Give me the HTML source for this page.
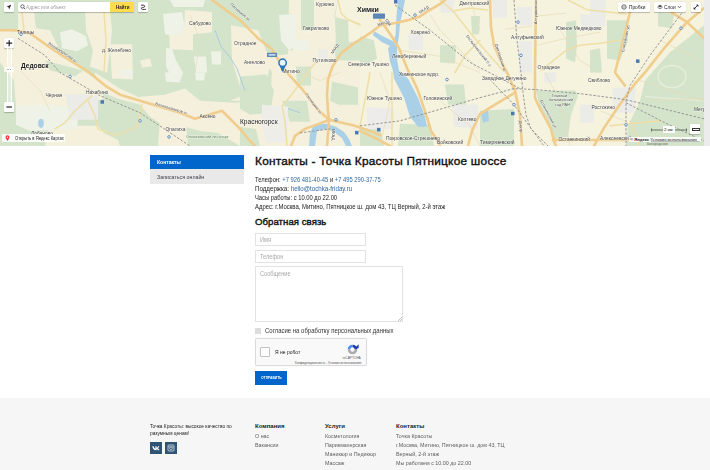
<!DOCTYPE html>
<html><head><meta charset="utf-8">
<style>
html,body{margin:0;padding:0}
body{width:710px;height:470px;overflow:hidden;background:#fff;position:relative;font-family:"Liberation Sans",sans-serif;color:#222}
.abs{position:absolute;white-space:nowrap}
#map{position:absolute;left:0;top:0;width:704px;height:146px;background:#f5f2de;overflow:hidden}
#strip{position:absolute;left:704px;top:0;width:6px;height:146px;background:#ececec}
.side1{position:absolute;left:150px;top:154.5px;width:94px;height:14.5px;background:#0066cc}
.side2{position:absolute;left:150px;top:169px;width:94px;height:15px;background:#e9e9e9}
.t6{font-size:6.6px;line-height:9px;transform-origin:0 0;transform:scaleX(0.88)}
.inp{position:absolute;border:1px solid #e2e2e2;background:#fff;box-sizing:border-box}
.ph{position:absolute;font-size:6.6px;line-height:8px;color:#a8a8a8;white-space:nowrap;transform-origin:0 0;transform:scaleX(0.85)}
#footer{position:absolute;left:0;top:398px;width:710px;height:72px;background:#f6f6f6}
.fh{font-size:6px;line-height:8px;font-weight:bold;color:#222}
.fl{font-size:6.2px;line-height:8px;color:#5e5e5e;transform-origin:0 0;transform:scaleX(0.865)}
</style></head><body>
<div id="map"><svg width="704" height="146" viewBox="0 0 704 145" preserveAspectRatio="none" style="position:absolute;left:0;top:0;filter:blur(0.3px)">
<rect width="704" height="146" fill="#f5f2de"/>
<!-- left half green base -->
<path fill="#d4e4cb" d="M0,0 L338,0 L335,17 L318,30 L300,30 L290,32 L289,60 L300,85 L285,100 L255,100 L240,100 L240,146 L0,146 Z"/>
<!-- beige patches in left half -->
<g fill="#f4f0dc">
<path d="M18,12 L34,12 L36,28 L50,30 L58,46 L52,50 L40,44 L30,33 L18,30 Z"/>
<path d="M0,30 L30,33 L47,45 L65,57 L83,70 L98,80 L104,98 L83,103 L70,112 L16,106 L14,80 L0,62 Z"/>
<path d="M95,72 L120,88 L140,97 L140,104 L118,98 L98,90 Z"/>
<path d="M85,10 L110,10 L112,30 L110,50 L107,72 L90,66 L93,50 L86,30 Z"/>
<path d="M49,125 L98,125 L104,132 L118,139 L120,145 L45,145 Z"/>
<path d="M110,44 L132,44 L133,79 L112,78 Z"/>
<path d="M185,10 L212,12 L212,32 L193,34 L193,50 L170,49 L169,32 L184,30 Z"/>
<path d="M231,25 L258,30 L266,50 L272,60 L266,80 L256,88 L240,86 L232,60 Z"/>
<path d="M140,96 L165,94 L185,88 L200,100 L235,102 L255,100 L260,120 L262,145 L240,145 L218,132 L200,130 L185,126 L165,126 L150,116 L140,104 Z"/>
<path d="M160,118 L186,122 L188,145 L158,145 Z"/>
<path d="M289,0 L301,0 L301,34 L314,34 L314,0 L338,0 L334,17 L336,50 L348,50 L360,60 L360,145 L240,145 L240,100 L270,100 L272,72 L266,60 L278,55 L288,54 Z"/>

<path d="M140,60 L150,58 L152,66 L142,67 Z"/>
<path d="M230,100 L250,92 L256,100 Z"/>
</g>
<!-- greens over beige (left half detail) -->
<g fill="#d4e4cb">
<path d="M282,100 L307,100 L310,121 L290,121 Z"/>
<path d="M296,66 L311,66 L311,85 L297,85 Z"/>
<path d="M332,81 L358,87 L358,104 L339,104 L330,100 Z"/>
<path d="M265,14 L293,14 L293,50 L275,50 Z"/>
<path d="M334,45 L360,40 L360,60 L336,60 Z"/>
<path d="M240,126 L256,128 L260,145 L240,145 Z"/>
<path d="M240,76 L266,74 L274,90 L270,112 L250,114 L240,108 Z"/>
<path d="M335,17 L348,20 L349,48 L336,50 Z"/>
<path d="M45,60 L83,70 L75,76 L50,70 Z"/>
</g>
<g fill="#eff2e6">
<path d="M16,105 L50,104 L79,108 L77,128 L30,130 L16,124 Z"/>
<path d="M166,48 L172,48 L176,60 L183,72 L181,79 L172,78 L166,66 Z"/>
<path d="M120,69 L132,69 L132,77 L121,77 Z"/>
</g>
<ellipse cx="41" cy="122.5" rx="2.8" ry="4.5" fill="#aad0e8"/>
<!-- right half greens -->
<g fill="#d4e4cb">
<path d="M360,36 L374,40 L377,58 L368,63 L360,62 Z"/>
<path d="M440,45 L456,45 L455,63 L440,62 Z"/>
<path d="M471,16 L480,16 L479,34 L472,34 Z"/>
<path d="M400,123 L430,124 L434,145 L398,145 Z"/>
<path d="M445,84 L464,84 L466,104 L448,104 Z"/>
<path d="M480,110 L514,108 L514,145 L480,145 Z"/>
<path d="M536,90 L575,90 L578,95 L571,114 L568,136 L554,138 L551,128 L540,108 Z"/>
<path d="M566,22 L576,20 L577,45 L575,62 L566,58 Z"/>
<path d="M590,50 L600,48 L602,72 L590,72 Z"/>
<path d="M607,20 L628,20 L628,40 L620,60 L607,58 Z"/>
<path d="M704,25 L670,52 L645,80 L640,100 L628,125 L626,145 L704,146 Z"/>
<path d="M658,12 L674,14 L672,28 L658,26 Z"/>
<path d="M360,128 L380,126 L384,145 L360,145 Z"/>
</g>
<!-- white clearings -->
<g fill="#eff2e6">
<path d="M60,32 L72,29 L86,36 L88,45 L77,51 L62,48 Z"/>
<path d="M163,14 L182,12 L185,28 L178,36 L165,34 Z"/>
<path d="M194,56 L206,56 L207,72 L196,72 Z"/>
<path d="M211,51 L221,51 L221,64 L212,64 Z"/>
<path d="M279,15 L295,14 L296,47 L289,50 L281,40 Z"/>
<path d="M294,40 L308,40 L309,50 L296,51 Z"/>
<path d="M165,72 L181,72 L180,82 L166,81 Z"/>
<path d="M195,72 L205,72 L204,80 L196,80 Z"/>
<path d="M170,0 L205,0 L203,7 L174,7 Z"/>

</g>
<!-- urban gray -->
<g fill="#ebebe7">
<path d="M65,93 L98,95 L98,119 L70,119 Z"/>
<path d="M262,104 L288,106 L288,140 L266,142 L262,124 Z" fill="#eeede8"/>
<path d="M318,49 L328,49 L328,58 L318,58 Z"/>
<path d="M408,34 L423,34 L423,50 L409,50 Z"/>
<path d="M440,0 L454,0 L453,13 L441,13 Z"/>
<path d="M492,0 L507,0 L507,18 L493,18 Z"/>
<path d="M517,7 L532,7 L532,25 L517,25 Z"/>
<path d="M519,41 L532,41 L532,72 L519,72 Z"/>
<path d="M580,14 L600,16 L598,30 L582,30 Z"/>
<path d="M612,88 L636,86 L634,112 L614,112 Z"/>
<path d="M590,0 L606,0 L605,26 L590,26 Z"/>
<path d="M452,104 L478,104 L478,128 L454,126 Z"/>
<path d="M366,106 L394,108 L394,128 L368,128 Z" fill="#edecea"/>
<path d="M544,72 L556,72 L556,82 L544,82 Z"/>
<path d="M580,104 L594,104 L594,122 L580,122 Z"/>
</g>
<ellipse cx="672" cy="76" rx="14" ry="11" fill="none" stroke="#e6eddb" stroke-width="1.4"/>
<path d="M645,96 L704,100" stroke="#e6eddb" stroke-width="1.1" fill="none"/>
<!-- water -->
<g fill="#aad0e8">
<path d="M398,0 L397,10 L396,23 L395.5,35 L392,43 L388,48 L390,61 L393,70 L394,78 L404,97 L410,116 L418,126 L427,126 L425,116 L418,97 L408,78 L399,70 L397.4,61 L397,48 L399,35 L400,23 L403,10 L405,0 Z"/>
<path d="M374,31 L383,36 L393,41 L391,46 L382,42 L373,35 Z"/>
<path d="M309,145 L310,132 L314,124 L326,123 L336,126 L344,131 L349,138 L352,145 L346,145 L342,137 L334,131 L326,128 L317,130 L315,145 Z"/>
<path d="M481,112 L488,110 L489,120 L483,122 Z"/>
</g>
<g fill="none" stroke="#a3c9e4" stroke-width="0.9">
<path d="M215,30 L221,46 L230,57 L237,68 L245,90"/>
<path d="M288,108 L300,112"/>
</g>
<!-- thin roads -->
<g fill="none" stroke="#e6dcb8" stroke-width="0.7">
<path d="M190,15 L200,40 L195,72"/>
<path d="M430,15 L440,30 L470,60 L480,70"/>
<path d="M400,50 L440,56 L480,72"/>
<path d="M560,30 L580,60 L600,72"/>
<path d="M640,80 L704,100"/>
<path d="M20,70 L40,90 L50,110"/>
<path d="M470,0 L480,30"/>
<path d="M660,40 L700,60"/>
<path d="M650,100 L704,98"/>
<path d="M505,29 L532,26"/>
<path d="M537,45 L566,38 L600,32"/>
<path d="M537,16 L566,13"/>
<path d="M545,72 L560,100 L570,145"/>
<path d="M440,100 L470,125 L480,145"/>
<path d="M600,110 L625,120"/>
<path d="M380,72 L390,100 L380,145"/>
<path d="M300,72 L320,80 L340,72"/>
</g>
<!-- yellow roads -->
<g fill="none" stroke="#efdfa6" stroke-width="1.5" stroke-linecap="round" stroke-linejoin="round">
<path d="M104,12 L106,40 L104,72"/>
<path d="M22,12 L24,30"/>
<path d="M92,95 L75,110 L65,122 L55,128"/>
<path d="M88,100 L95,115 L98,128 L118,135"/>
<path d="M142,104 L137,126 L120,133"/>
<path d="M315.5,62 L309,70 L298.5,85 L290,96 L282,105 L285,120 L287,145"/>
<path d="M338,0 L341,13 L347,19 L360,25"/>
<path d="M349,20 L360,24"/>
<path d="M392,72 L392,145"/>
<path d="M541,70 L566,50 L580,45 L600,43 L620,40"/>
<path d="M568,0 L587,9.6 L626,14"/>
<path d="M453,11 L469,31 L485,50 L503,70"/>
<path d="M455,72 L465,55 L480,40"/>
<path d="M610,125 L660,120"/>
<path d="M630,120 L640,145"/>
<path d="M440,0 L453,11 L470,8 L487,10"/>
<path d="M370,72 L365,100 L360,125"/>
</g>
<!-- orange main roads -->
<g fill="none" stroke="#f0cd8c" stroke-width="2.6" stroke-linecap="round" stroke-linejoin="round">
<path d="M0,30 L15,30 L30,33 L47,45 L65,57 L88,71 L105,85 L120,94 L150,103 L180,112 L195,118 L212,113 L222,110 L240,128 L250,140 L255,145"/>
<path d="M212,0 L240,20 L258,38 L272,49 L285,70 L303,89.6 L317.7,108.7 L329,119 L354,124.7 L370,130 L380,134"/>
<path d="M329,119 L328,111 L327,94 L328,79 L332.5,66 L341,53 L354,43 L370,33 L380,25.3 L395.5,22.8 L408,20 L420,16.4 L427,11.5 L440,4 L445,0"/>
<path d="M329,119 L327,145"/>
<path d="M330,119 L305,128 L295,135 L291,145"/>
<path d="M380,20 L385,26.6 L393,38 L399,48 L404.4,61 L408,70 L412,77 L418,90 L427,116.5 L431,130 L438,140 L440,145"/>
<path d="M360,130 L375,137 L390,145"/>
<path d="M490,0 L491,27 L494,45 L501,61 L507,72 L515,90 L520,114 L522,145"/>
<path d="M515,92 L500,101 L480,113 L472,130 L468,145"/>
<path d="M536,0 L535,72 L535,97 L539,106 L551,128 L554,140 L556,145"/>
<path d="M553,139 L600,139 L630,139"/>
<path d="M630,12 L622,45 L615,72 L625,85"/>
<path d="M665,8 L687,22 L704,38"/>
<path d="M704,8 L687,22 L664,48 L645,72 L635,83 L619,105 L604,127 L594,145"/>
</g>
<!-- railways -->
<g fill="none" stroke="#8e8e8e" stroke-width="0.9" stroke-dasharray="2.5,1.6">
<path d="M18,38 L45,55 L60,72 L100,95 L140,112 L190,145"/>
<path d="M395,5 L430,30 L470,62 L520,88"/>
<path d="M480,97 L514,88 L536,89 L580,93 L626,99 L704,118"/>
<path d="M514,0 L517,40 L521,72 L523,92 L526,114 L531,128 L548,145"/>
<path d="M490,79 L514,104 L527,122 L544,145"/>
<path d="M684,10 L650,55 L630,85 L626,100 L626,145"/>
<path d="M626,102 L665,122 L704,140"/>
<path d="M360,125 L400,120 L480,97"/>
<path d="M300,132 L330,128"/>
</g>
<!-- labels -->
<g font-family="Liberation Sans, sans-serif" fill="#333" stroke="rgba(255,255,255,0.55)" stroke-width="0.9" paint-order="stroke" stroke-linejoin="round">
<text x="357" y="11.5" font-size="7" font-weight="bold" fill="#222">Химки</text>
<text x="21" y="67.5" font-size="6.6" font-weight="bold" fill="#222">Дедовск</text>
<text x="240" y="123" font-size="6.6" fill="#222">Красногорск</text>
<g font-size="4.9" fill="#444">
<text x="17" y="34">Талицы</text>
<text x="102" y="51.5">д. Желебино</text>
<text x="45.5" y="96.5">Чёрная</text>
<text x="86" y="93">Нахабино</text>
<text x="31" y="133.7">Лобаново</text>
<text x="165.5" y="130.3">Опалиха</text>
<text x="189" y="24.5">Сабурово</text>
<text x="234" y="44.5">Отрадное</text>
<text x="244" y="63.4">Ангелово</text>
<text x="282.5" y="72.5">Митино</text>
<text x="312.5" y="61.7">Путилково</text>
<text x="316" y="6.4">Куркино</text>
<text x="303" y="29.6">Гаврилково</text>
<text x="348" y="65.5">Северное Тушино</text>
<text x="410.5" y="34">Ховрино</text>
<text x="392" y="58">Левобережный</text>
<text x="367" y="99.5">Южное Тушино</text>
<text x="423.5" y="99">Головинский</text>
<text x="458" y="120">Коптево</text>
<text x="482" y="79.6">Западное Дегунино</text>
<text x="511" y="39">Алтуфьевский</text>
<text x="556" y="29.6">Южное Медведково</text>
<text x="537.5" y="68.4">Отрадное</text>
<text x="588" y="81">Свиблово</text>
<text x="591.5" y="108.3">Ростокино</text>
<text x="600" y="138.8">Алексеевский</text>
<text x="558.5" y="139.6">Останкинский</text>
<text x="459.5" y="4.5">Дмитровский</text>
<text x="437" y="143">Войковский</text>
<text x="480" y="143">Тимирязевский</text>
<text x="386" y="138.8">Покровское-Стрешнево</text>
<text x="399" y="75">Химкинское вдхр.</text>
<text x="694" y="110">Метр</text>
<text x="199.5" y="117">Аксёно</text>
</g>
<g font-size="3.8" fill="#555">
<text x="552" y="96.5">Главный</text>
<text x="549" y="100.8">ботанический</text>
<text x="555" y="105">сад РАН</text>
<text x="186" y="137" fill="#5f7f55">Опалиховский лесопарк</text>
</g>
<g font-size="4" fill="#555">
<text transform="translate(48,44) rotate(33)">Волоколамское ш.</text>
<text transform="translate(155,104) rotate(17)">Волоколамское ш.</text>
<text transform="translate(230,5) rotate(40)">Пятницкое ш.</text>
<text transform="translate(305,94) rotate(52)">Пятницкое ш.</text>
<text transform="translate(333,54) rotate(-58)">МКАД</text>
<text transform="translate(378,26) rotate(-17)">МКАД</text>
<text transform="translate(420,14) rotate(-35)">МКАД</text>
<text transform="translate(537,24) rotate(-90)">Алтуфьевское ш.</text>
<text transform="translate(495,44) rotate(72)">Дмитровское ш.</text>
<text transform="translate(624,52) rotate(-78)">Енисейская ул.</text>
<text transform="translate(332,128) rotate(90)">МКАД</text>
<text transform="translate(519,120) rotate(85)">Дмитр.</text>
<text transform="translate(540,100) rotate(62)">Ботаническая ул.</text>
<text transform="translate(385,20) rotate(55)">СВХ</text>
<text transform="translate(466,36) rotate(52)">Бескудниковский б-р</text>
</g>
</g>
<!-- transit icons -->
<g fill="#fff" stroke="#4a78b5" stroke-width="0.8">
<circle cx="415" cy="15" r="1.3"/><circle cx="518" cy="22" r="1.3"/><circle cx="521" cy="55" r="1.3"/>
<circle cx="70" cy="76" r="1.3"/><circle cx="140" cy="120" r="1.3"/><circle cx="169" cy="136" r="1.3"/>
<circle cx="681" cy="28" r="1.3"/><circle cx="626" cy="124" r="1.3"/><circle cx="514" cy="104" r="1.3"/>
<circle cx="447" cy="79" r="1.3"/><circle cx="336" cy="119" r="1.3"/><circle cx="21" cy="34" r="1.3"/>
</g>
<g fill="#4a78b5">
<rect x="100.5" y="99.5" width="3.5" height="3.5"/><rect x="394" y="0" width="3.5" height="3.5"/>
<rect x="377" y="127" width="3.5" height="3.5"/><rect x="511" y="111" width="3.5" height="3.5"/>
<rect x="636" y="59" width="3.5" height="3.5"/><rect x="355" y="130" width="3.5" height="3.5"/>
<rect x="373" y="13.5" width="12" height="5" rx="0.6" fill="#5b86b8"/>
</g>
<!-- pin -->
<g>
<path d="M279.8,65.5 L282.2,71.5 L285.6,65.8 Z" fill="#2a73b8"/>
<circle cx="282.6" cy="62.4" r="3.7" fill="#e6f3fb" stroke="#2a73b8" stroke-width="1.5"/>
<rect x="267" y="52.5" width="10" height="4" fill="#5b86b8" rx="0.5"/>
<rect x="268.5" y="53.8" width="7" height="1.4" fill="#dfe9f4"/>
</g>
</svg>
<div style="position:absolute;left:4px;top:1.5px;width:10px;height:10px;background:#fff;border-radius:1px;box-shadow:0 0.5px 1px rgba(0,0,0,.25)"><svg width="10" height="10" viewBox="0 0 10 10" style="position:absolute;left:0;top:0"><path d="M7.3,2.6 L2.6,4.8 L4.6,5.2 L5.1,7.4 Z" fill="#222"/></svg></div>
<div style="position:absolute;left:18px;top:1.5px;width:116px;height:10px;background:#fff;border-radius:1px;box-shadow:0 0.5px 1px rgba(0,0,0,.25)"></div>
<svg width="6" height="6" viewBox="0 0 6 6" style="position:absolute;left:20px;top:3.5px"><circle cx="2.5" cy="2.5" r="1.7" fill="none" stroke="#333" stroke-width="0.7"/><path d="M3.7,3.7 L5.2,5.2" stroke="#333" stroke-width="0.8"/></svg>
<div style="position:absolute;left:25.5px;top:2.5px;font-size:6px;line-height:8px;color:#999;white-space:nowrap;transform-origin:0 0;transform:scaleX(0.8)">Адрес или объект</div>
<div style="position:absolute;left:110px;top:1.5px;width:24px;height:10px;background:#ffdb4d;border-radius:0 1px 1px 0"></div>
<div style="position:absolute;left:116px;top:2.5px;font-size:5.6px;line-height:8px;color:#222;font-weight:bold;white-space:nowrap;transform-origin:0 0;transform:scaleX(0.8)">Найти</div>
<div style="position:absolute;left:138px;top:1.5px;width:10px;height:10px;background:#fff;border-radius:1px;box-shadow:0 0.5px 1px rgba(0,0,0,.25)"><svg width="10" height="10" viewBox="0 0 10 10" style="position:absolute;left:0;top:0"><path d="M3,3.2 L5.5,3.2 C7,3.2 7,5.4 5.5,5.4 L4.5,5.4 C3,5.4 3,7.4 4.5,7.4 L6.5,7.4" fill="none" stroke="#222" stroke-width="0.9"/><circle cx="7.2" cy="7.4" r="0.7" fill="#222"/></svg></div>

<div style="position:absolute;left:3.5px;top:37.5px;width:10.5px;height:10.5px;background:#fff;border-radius:1px;box-shadow:0 0.5px 1px rgba(0,0,0,.25)"><svg width="10" height="10" viewBox="0 0 10 10" style="position:absolute;left:0;top:0"><path d="M2.2,5.2 L8.2,5.2 M5.2,2.2 L5.2,8.2" stroke="#222" stroke-width="1.2"/></svg></div>
<div style="position:absolute;left:6.5px;top:48px;width:3.5px;height:55px;background:rgba(255,255,255,.35);border-left:0.5px solid rgba(255,255,255,.9);border-right:0.5px solid rgba(255,255,255,.9)"></div>
<div style="position:absolute;left:4.3px;top:66.5px;width:9.3px;height:5px;background:rgba(255,255,255,.7)"><div style="position:absolute;left:3px;top:2px;width:3.5px;height:1px;border-top:0.5px dotted #aaa"></div></div>
<div style="position:absolute;left:3.5px;top:102px;width:10.5px;height:10px;background:#fff;border-radius:1px;box-shadow:0 0.5px 1px rgba(0,0,0,.25)"><svg width="10" height="10" viewBox="0 0 10 10" style="position:absolute;left:0;top:0"><path d="M2.4,5 L8,5" stroke="#222" stroke-width="1.2"/></svg></div>

<div style="position:absolute;left:2px;top:133.5px;width:63px;height:8.5px;background:rgba(255,255,255,.88);border-radius:1px"></div>
<svg width="5" height="6" viewBox="0 0 5 6" style="position:absolute;left:5.2px;top:135px"><path d="M2.5,0.3 a2,2 0 0 1 2,2 c0,1.3 -2,3.5 -2,3.5 c0,0 -2,-2.2 -2,-3.5 a2,2 0 0 1 2,-2 z" fill="#f33"/><circle cx="2.5" cy="2.3" r="0.7" fill="#fff"/></svg>
<div style="position:absolute;left:15px;top:134.5px;font-size:5.5px;line-height:7px;color:#222;white-space:nowrap;transform-origin:0 0;transform:scaleX(0.75)">Открыть в Яндекс Картах</div>

<div style="position:absolute;left:618px;top:1.5px;width:32px;height:10px;background:#fff;border-radius:1px;box-shadow:0 0.5px 1px rgba(0,0,0,.25)"></div>
<svg width="6" height="6" viewBox="0 0 6 6" style="position:absolute;left:621px;top:4px"><circle cx="3" cy="3" r="2.2" fill="none" stroke="#444" stroke-width="0.8"/><path d="M1.5,3 L4.5,3" stroke="#444" stroke-width="0.6"/></svg>
<div style="position:absolute;left:628.5px;top:2.8px;font-size:6px;line-height:8px;color:#222;white-space:nowrap;transform-origin:0 0;transform:scaleX(0.8)">Пробки</div>
<div style="position:absolute;left:654px;top:1.5px;width:32px;height:10px;background:#fff;border-radius:1px;box-shadow:0 0.5px 1px rgba(0,0,0,.25)"></div>
<svg width="6" height="6" viewBox="0 0 6 6" style="position:absolute;left:656.5px;top:4px"><path d="M3,0.8 L5.5,2.2 L3,3.6 L0.5,2.2 Z" fill="#555"/><path d="M0.5,3.4 L3,4.8 L5.5,3.4" fill="none" stroke="#555" stroke-width="0.7"/></svg>
<div style="position:absolute;left:664.3px;top:2.8px;font-size:6px;line-height:8px;color:#222;white-space:nowrap;transform-origin:0 0;transform:scaleX(0.8)">Слои</div>
<svg width="5" height="4" viewBox="0 0 5 4" style="position:absolute;left:677px;top:5px"><path d="M0.8,1 L2.5,2.8 L4.2,1" fill="none" stroke="#333" stroke-width="0.7"/></svg>
<div style="position:absolute;left:690.5px;top:1.5px;width:10px;height:10px;background:#fff;border-radius:1px;box-shadow:0 0.5px 1px rgba(0,0,0,.25)"><svg width="10" height="10" viewBox="0 0 10 10" style="position:absolute;left:0;top:0"><path d="M3,7 L7,3 M5.5,3 L7,3 L7,4.5 M3,5.5 L3,7 L4.5,7" fill="none" stroke="#222" stroke-width="0.9"/></svg></div>

<svg width="40" height="6" viewBox="0 0 40 6" style="position:absolute;left:650px;top:126.5px"><path d="M1.5,3 L36.5,3 M1.5,1.5 L1.5,4.5 M36.5,1.5 L36.5,4.5" stroke="#4f5a4f" stroke-width="0.8" fill="none"/></svg>
<div style="position:absolute;left:662.5px;top:126px;width:12px;height:7px;background:rgba(255,255,255,.9)"></div>
<div style="position:absolute;left:664px;top:126.5px;font-size:4.4px;line-height:6px;color:#222;white-space:nowrap">2 км</div>
<div style="position:absolute;left:690px;top:124px;width:10px;height:10px;background:#fff;border-radius:1px;box-shadow:0 0.5px 1px rgba(0,0,0,.2)"><div style="position:absolute;left:1.5px;top:4px;width:6px;height:1.4px;border:0.6px solid #333"></div></div>
<div style="position:absolute;left:629px;top:137px;width:72px;height:5px;background:rgba(255,255,255,.85)"></div>
<div style="position:absolute;left:630px;top:136.8px;font-size:4.2px;line-height:5px;color:#222;white-space:nowrap"><b>© Яндекс</b> Условия использования</div>
<div style="position:absolute;left:651px;top:141px;width:49px;height:1px;background:rgba(0,0,0,.25)"></div>
<div style="position:absolute;left:647px;top:142px;font-size:3.6px;line-height:4px;color:#666;white-space:nowrap">Богородское</div>
</div>
<div id="strip"></div>

<div class="side1"></div>
<div class="side2"></div>
<div class="abs" style="left:157px;top:157px;font-size:5.5px;line-height:10px;color:#fff;font-weight:bold;transform-origin:0 0;transform:scaleX(0.92)">Контакты</div>
<div class="abs" style="left:157px;top:172px;font-size:5.5px;line-height:10px;color:#3d4046;transform-origin:0 0;transform:scaleX(0.96)">Записаться онлайн</div>

<div class="abs" style="left:255px;top:154px;font-size:11.8px;line-height:14px;font-weight:normal;-webkit-text-stroke:0.4px #111;color:#111;letter-spacing:0.26px">Контакты - Точка Красоты Пятницкое шоссе</div>
<div class="abs t6" style="left:255px;top:175px;color:#222">Телефон: <span style="color:#2e6aa5">+7 926 481-40-45</span> и <span style="color:#2e6aa5">+7 495 290-37-75</span></div>
<div class="abs t6" style="left:255px;top:184px;color:#222;transform:scaleX(0.938)">Поддержка: <span style="color:#2e6aa5">hello@tochka-friday.ru</span></div>
<div class="abs t6" style="left:255px;top:193px;color:#222">Часы работы: с 10.00 до 22.00</div>
<div class="abs t6" style="left:255px;top:202px;color:#222;transform:scaleX(0.901)">Адрес: г.Москва, Митино, Пятницкое ш. дом 43, ТЦ Верный, 2-й этаж</div>

<div class="abs" style="left:255px;top:215.5px;font-size:9.6px;line-height:12px;font-weight:normal;-webkit-text-stroke:0.4px #111;color:#111;letter-spacing:0.05px">Обратная связь</div>
<div class="inp" style="left:255px;top:233px;width:111px;height:13px"></div>
<div class="ph" style="left:259.5px;top:236px">Имя</div>
<div class="inp" style="left:255px;top:250px;width:111px;height:13px"></div>
<div class="ph" style="left:259.5px;top:253px">Телефон</div>
<div class="inp" style="left:255px;top:266px;width:148px;height:56px"></div>
<div class="ph" style="left:259.5px;top:269.5px">Сообщение</div>
<svg width="6" height="6" viewBox="0 0 6 6" style="position:absolute;left:396.5px;top:315.5px"><path d="M5,1 L1,5 M5,3 L3,5" stroke="#999" stroke-width="0.6"/></svg>

<div class="abs" style="left:255px;top:328px;width:5.5px;height:5.5px;background:#dcdcdc"></div>
<div class="abs t6" style="left:265px;top:326px;color:#333;transform:scaleX(0.906)">Согласие на обработку персональных данных</div>

<div class="abs" style="left:255px;top:338px;width:112px;height:28px;background:#f9f9f9;border:1px solid #dadada;box-sizing:border-box;border-radius:1.5px;box-shadow:0 0 1px rgba(0,0,0,.08)"></div>
<div class="abs" style="left:260px;top:347px;width:10px;height:10px;background:#fff;border:1px solid #c1c1c1;box-sizing:border-box;border-radius:1px"></div>
<div class="abs" style="left:275px;top:347.8px;font-size:6px;line-height:8px;color:#222;transform-origin:0 0;transform:scaleX(0.83)">Я не робот</div>
<svg width="13" height="13" viewBox="0 0 13 13" style="position:absolute;left:345.5px;top:343px">
<path d="M6.5,3 A3.5,3.5 0 0 1 10,6.5" fill="none" stroke="#1c3aa9" stroke-width="2.6"/>
<path d="M8.6,5.2 L12.6,5.2 L12.6,1.2 Z" fill="#1c3aa9"/>
<path d="M3,6.5 A3.5,3.5 0 0 1 6.5,3" fill="none" stroke="#4a8af4" stroke-width="2.6"/>
<path d="M10,6.5 A3.5,3.5 0 0 1 3,6.5" fill="none" stroke="#ababab" stroke-width="2.6"/>
</svg>
<div class="abs" style="left:342.5px;top:356px;font-size:3.2px;line-height:4px;color:#555">reCAPTCHA</div>
<div class="abs" style="left:295px;top:362px;font-size:3px;line-height:3px;color:#555">Конфиденциальность - Условия использования</div>

<div class="abs" style="left:255px;top:371px;width:32px;height:14px;background:#0066cc"></div>
<div class="abs" style="left:261px;top:375px;font-size:3.9px;line-height:6px;color:#fff;font-weight:bold;transform-origin:0 0;transform:scaleX(0.86)">ОТПРАВИТЬ</div>

<div id="footer"></div>
<div class="abs" style="left:150px;top:422.5px;font-size:5.6px;line-height:7px;color:#222;transform-origin:0 0;transform:scaleX(0.86)">Точка Красоты: высокое качество по<br>разумным ценам!</div>
<div class="abs" style="left:150px;top:442px;width:12px;height:12px;background:#2f5475"><svg width="12" height="12" viewBox="0 0 12 12" style="position:absolute;left:0;top:0"><path d="M2.3,4.2 L3.6,4.2 C4.1,5.6 4.8,6.6 5.4,6.8 L5.4,4.2 L6.6,4.2 L6.6,5.8 C7.2,5.7 7.8,4.9 8.1,4.2 L9.3,4.2 C9,5.2 8.3,6 7.8,6.3 C8.4,6.6 9.1,7.4 9.5,8.2 L8.2,8.2 C7.8,7.5 7.2,7 6.6,6.9 L6.6,8.2 L6,8.2 C3.9,8.2 2.7,6.6 2.3,4.2 Z" fill="#fff"/></svg></div>
<div class="abs" style="left:165px;top:442px;width:12px;height:12px;background:#2f5475"><svg width="12" height="12" viewBox="0 0 12 12" style="position:absolute;left:0;top:0"><rect x="3" y="3" width="6" height="6" rx="0.8" fill="none" stroke="#dfe6ee" stroke-width="0.8"/><circle cx="6" cy="6.2" r="1.4" fill="none" stroke="#dfe6ee" stroke-width="0.7"/><path d="M3,4.8 L9,4.8" stroke="#dfe6ee" stroke-width="0.5"/></svg></div>

<div class="abs fh" style="left:255px;top:422px">Компания</div>
<div class="abs fl" style="left:255px;top:432px">О нас</div>
<div class="abs fl" style="left:255px;top:441px">Вакансии</div>

<div class="abs fh" style="left:325px;top:422px">Услуги</div>
<div class="abs fl" style="left:325px;top:432px">Косметология</div>
<div class="abs fl" style="left:325px;top:441px">Парикмахерская</div>
<div class="abs fl" style="left:325px;top:450px">Маникюр и Педикюр</div>
<div class="abs fl" style="left:325px;top:459.3px">Массаж</div>

<div class="abs fh" style="left:396px;top:422px">Контакты</div>
<div class="abs fl" style="left:396px;top:432px">Точка Красоты</div>
<div class="abs fl" style="left:396px;top:441px">г.Москва, Митино, Пятницкое ш. дом 43, ТЦ</div>
<div class="abs fl" style="left:396px;top:450px">Верный, 2-й этаж</div>
<div class="abs fl" style="left:396px;top:459.3px">Мы работаем с 10.00 до 22.00</div>
</body></html>
